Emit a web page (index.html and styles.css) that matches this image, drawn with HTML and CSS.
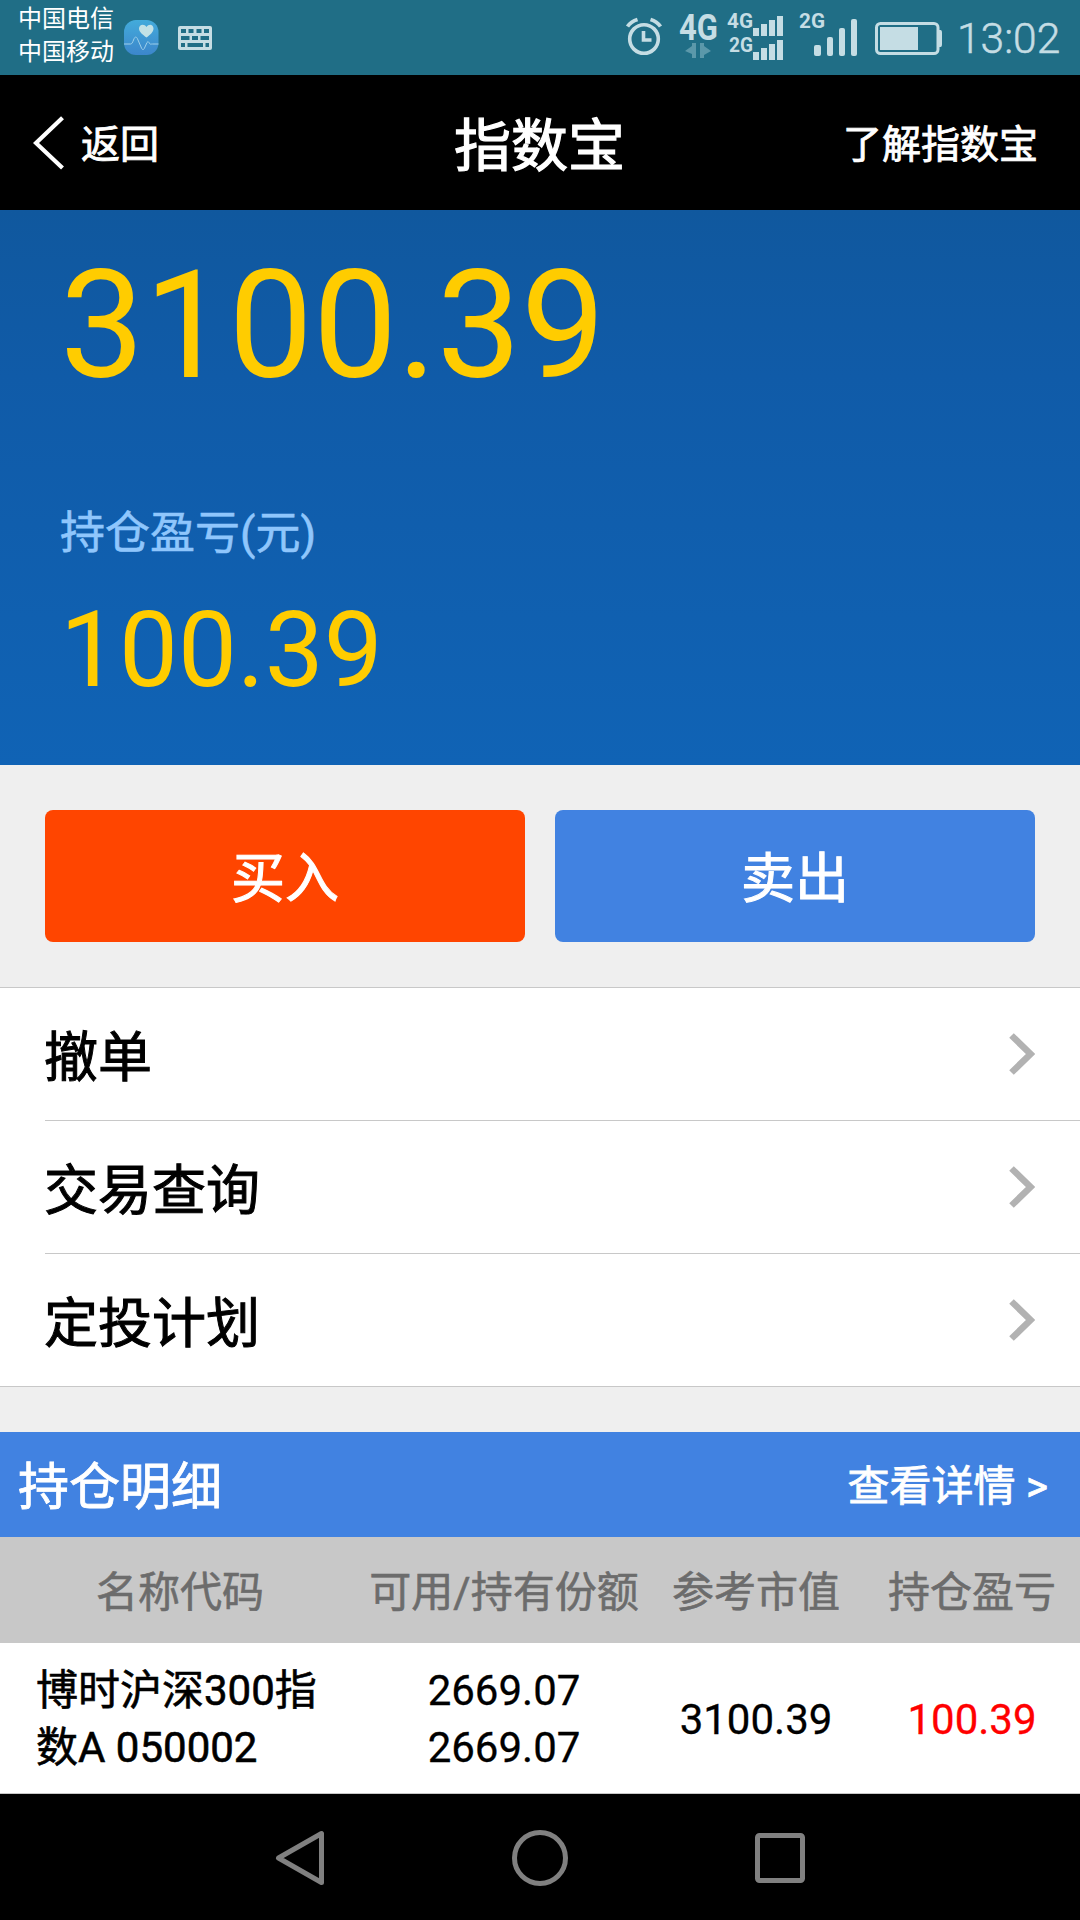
FILE: index.html
```html
<!DOCTYPE html>
<html lang="zh-CN">
<head>
    <meta charset="UTF-8">
    <meta name="viewport" content="width=device-width, initial-scale=1.0">
    <title>指数宝</title>
    <link rel="stylesheet" href="styles.css">
</head>
<body>
    <div class="status-bar">
        <div class="carriers">
            <div>中国电信</div>
            <div>中国移动</div>
        </div>
        <svg class="app-icon" width="35" height="35" viewBox="0 0 35 35">
            <defs>
                <linearGradient id="health" x1="0" y1="0" x2="0" y2="1">
                    <stop offset="0" stop-color="#43abdb"/>
                    <stop offset="1" stop-color="#3c86cb"/>
                </linearGradient>
            </defs>
            <rect x="0" y="0" width="34.500" height="35" rx="12" fill="url(#health)"/>
            <path d="M22.500 17.500C18.500 14.500 15 12 15 8.500c0-4.500 5.500-5 7.500-1.500 2-3.500 7-3 7 1.500 0 3.500-3 6-7 9z" fill="#c3e2e6"/>
            <path d="M0 24h6.500c1.500 0 2-1.500 3-4 1.500-4 3-4 4.500 0l3.500 8c1 2.200 2 2.200 3 0l2.500-5.500c1-1.500 2-.5 2.500 1 .5 1 1.500.5 3 .5h6" fill="none" stroke="#9fd0ea" stroke-width="1"/>
        </svg>
        <svg class="keyboard-icon" width="34" height="24" viewBox="0 0 34 24">
            <rect width="34" height="24" rx="2" fill="#c5dde4"/>
            <path d="M3 3h5v4H3zM10.500 3h5v4h-5zM18.500 3h5v4h-5zM26 3h5v4h-5zM3 10h8.500v4H3zM14 10h6v4h-6zM22.500 10H31v4h-8.500zM3 17h4v4H3zM9.500 17H25v4H9.500zM27.500 17H31v4h-3.500z" fill="#206e86"/>
        </svg>
        <svg class="status-icons" width="320" height="75" viewBox="624 0 320 75">
            <g fill="none" stroke="#c5dde4">
                <circle cx="644" cy="39" r="14.300" stroke-width="3.600"/>
                <path d="M643.500 31v9h8" stroke-width="3.600"/>
                <path d="M627.500 26.500Q631 21.500 637.500 19.500M660.500 26.500Q657 21.500 650.500 19.500" stroke-width="3.800"/>
            </g>
            <g fill="#c5dde4" class="net">
                <text x="679" y="40" font-size="36" textLength="39" lengthAdjust="spacingAndGlyphs">4G</text>
                <text x="727" y="28" font-size="20" textLength="26" lengthAdjust="spacingAndGlyphs">4G</text>
                <text x="729" y="52" font-size="20" textLength="24" lengthAdjust="spacingAndGlyphs">2G</text>
                <text x="799" y="28" font-size="20" textLength="26" lengthAdjust="spacingAndGlyphs">2G</text>
            </g>
            <path d="M696 43v15h-4v-4l-7-3 7-5v-3zM700 43v15h4v-3l7-4-7-5v-3z" fill="#5b98aa"/>
            <g fill="#c5dde4">
                <path d="M753 28h6v8h-6zM761 24h6v12h-6zM769 20h6v16h-6zM777 16h6v20h-6z"/>
                <path d="M753 52h6v8h-6zM761 48h6v12h-6zM769 44h6v16h-6zM777 40h6v20h-6z"/>
                <rect x="814" y="45" width="7" height="11" rx="2"/>
                <rect x="827" y="37" width="6" height="19" rx="2"/>
                <rect x="839" y="28" width="6" height="28" rx="2"/>
                <rect x="851" y="19" width="6" height="37" rx="2"/>
                <rect x="880" y="27" width="38" height="23"/>
                <path d="M939 30h1.500q1.500 0 1.500 3v11q0 3-1.500 3h-1.500z"/>
            </g>
            <rect x="876.500" y="23.500" width="61.500" height="30" rx="4" fill="none" stroke="#c5dde4" stroke-width="3"/>
        </svg>
        <div class="clock">13:02</div>
    </div>

    <div class="header">
        <div class="back">
            <svg width="32" height="54" viewBox="0 0 32 54">
                <path d="M29.500 1.800L3 27l26.500 25" fill="none" stroke="#fff" stroke-width="4.200"/>
            </svg>
            <span>返回</span>
        </div>
        <div class="title">指数宝</div>
        <div class="about">了解指数宝</div>
    </div>

    <div class="summary">
        <div class="total">3100.39</div>
        <div class="label">持仓盈亏(元)</div>
        <div class="profit">100.39</div>
    </div>

    <div class="actions">
        <div class="btn buy">买入</div>
        <div class="btn sell">卖出</div>
    </div>

    <div class="menu">
        <div class="menu-item">
            <span>撤单</span>
            <svg width="26" height="42" viewBox="0 0 26 42"><path d="M2.500 2.500L21.500 21 2.500 39.500" fill="none" stroke="#b2b2b2" stroke-width="6.500"/></svg>
        </div>
        <div class="menu-item">
            <span>交易查询</span>
            <svg width="26" height="42" viewBox="0 0 26 42"><path d="M2.500 2.500L21.500 21 2.500 39.500" fill="none" stroke="#b2b2b2" stroke-width="6.500"/></svg>
        </div>
        <div class="menu-item">
            <span>定投计划</span>
            <svg width="26" height="42" viewBox="0 0 26 42"><path d="M2.500 2.500L21.500 21 2.500 39.500" fill="none" stroke="#b2b2b2" stroke-width="6.500"/></svg>
        </div>
    </div>

    <div class="detail-header">
        <div class="detail-title">持仓明细</div>
        <div class="detail-more">查看详情 &gt;</div>
    </div>
    <div class="row row-head">
        <div>名称代码</div>
        <div>可用/持有份额</div>
        <div>参考市值</div>
        <div>持仓盈亏</div>
    </div>
    <div class="row row-data">
        <div class="name">博时沪深300指<br>数A 050002</div>
        <div>2669.07<br>2669.07</div>
        <div>3100.39</div>
        <div class="red">100.39</div>
    </div>

    <div class="nav-bar">
        <svg width="50" height="64" viewBox="0 0 50 64"><path d="M46.500 7.500v49L3.500 32z" fill="none" stroke="#808080" stroke-width="5" stroke-linejoin="round"/></svg>
        <svg width="56" height="56" viewBox="0 0 56 56"><circle cx="28" cy="28" r="25.500" fill="none" stroke="#808080" stroke-width="5"/></svg>
        <svg width="50" height="50" viewBox="0 0 50 50"><rect x="2.500" y="2.500" width="45" height="45" rx="2" fill="none" stroke="#808080" stroke-width="5"/></svg>
    </div>
</body>
</html>
```
FILE: styles.css
```css
* {
    box-sizing: border-box;
}

body {
    margin: 0;
    width: 1080px;
    height: 1920px;
    overflow: hidden;
    font-family: Roboto, "Noto Sans CJK SC", sans-serif;
    background-color: #efefef;
    color: #000;
}

svg {
    display: block;
    flex-shrink: 0;
}

.status-bar {
    display: flex;
    align-items: center;
    height: 75px;
    padding: 0 18px;
    background-color: #206e86;
    color: #c5dde4;
}

.carriers {
    width: 96px;
    font-size: 24px;
    line-height: 33px;
    color: #fff;
    margin-top: -4px;
}

.app-icon {
    margin-left: 10px;
}

.keyboard-icon {
    margin-left: 19px;
}

.status-icons {
    margin-left: auto;
}

.net {
    font-weight: bold;
}

.clock {
    width: 105px;
    margin-left: 13px;
    font-size: 42.5px;
    font-weight: 300;
    line-height: 75px;
    padding-top: 2px;
    white-space: nowrap;
    -webkit-text-stroke: 0.5px;
}

.header {
    display: grid;
    grid-template-columns: 1fr auto 1fr;
    align-items: center;
    height: 135px;
    padding: 0 42px 0 33px;
    background-color: #000;
    color: #fff;
    font-size: 39px;
    -webkit-text-stroke: 0.8px;
}

.back {
    display: flex;
    align-items: center;
    gap: 16px;
}

.back span,
.about {
    padding-bottom: 3px;
}

.title {
    font-size: 57px;
    padding: 0 0 4px 8px;
    -webkit-text-stroke: 1.2px;
}

.about {
    text-align: right;
}

.summary {
    height: 555px;
    padding: 41px 60px 0;
    background: linear-gradient(#10589e, #105ba8 30%, #1063b5);
    color: #fc0;
}

.total {
    font-size: 150px;
    line-height: 150px;
}

.label {
    margin-top: 103px;
    font-size: 45px;
    line-height: 60px;
    color: #8fc6fc;
    -webkit-text-stroke: 0.6px;
}

.profit {
    margin-top: 34px;
    font-size: 105px;
    line-height: 105px;
}

.actions {
    display: flex;
    gap: 30px;
    padding: 45px;
    height: 222px;
}

.btn {
    flex: 1;
    padding-top: 4px;
    border-radius: 8px;
    color: #fff;
    font-size: 54px;
    line-height: 132px;
    height: 132px;
    text-align: center;
    -webkit-text-stroke: 1px;
}

.buy {
    background-color: #ff4500;
}

.sell {
    background-color: #4182e1;
}

.menu {
    padding-left: 45px;
    background-color: #fff;
    border-top: 1px solid #c8c8c8;
    border-bottom: 1px solid #c8c8c8;
}

.menu-item {
    display: flex;
    align-items: center;
    justify-content: space-between;
    height: 133px;
    padding-right: 45px;
    font-size: 54px;
    border-bottom: 1px solid #c8c8c8;
}

.menu-item span {
    margin-left: -1px;
    padding-bottom: 2px;
    -webkit-text-stroke: 1px;
}

.menu-item:last-child {
    height: 132px;
    border-bottom: none;
}

.detail-header {
    display: flex;
    align-items: center;
    justify-content: space-between;
    height: 105px;
    margin-top: 45px;
    padding: 0 32px 0 18px;
    background-color: #4182e1;
    color: #fff;
    -webkit-text-stroke: 0.8px;
}

.detail-title {
    font-size: 51px;
    padding-bottom: 3px;
}

.detail-more {
    font-size: 42px;
    padding-bottom: 5px;
}

.row {
    display: grid;
    grid-template-columns: 360px 288px 216px 216px;
    align-items: center;
    font-size: 42px;
    line-height: 57px;
    text-align: center;
    white-space: nowrap;
}

.row-head {
    height: 106px;
    padding-top: 4px;
    background-color: #c8c8c8;
    color: #6c6c6c;
    -webkit-text-stroke: 0.6px;
}

.row-data {
    height: 151px;
    padding-top: 2px;
    background-color: #fff;
    border-bottom: 1px solid #c8c8c8;
    -webkit-text-stroke: 0.3px;
}

.name {
    padding-left: 36px;
    text-align: left;
    -webkit-text-stroke: 0.6px;
}

.red {
    color: #f00;
}

.nav-bar {
    display: flex;
    align-items: center;
    justify-content: space-between;
    height: 126px;
    padding: 2px 275px 0;
    background-color: #000;
}
```
